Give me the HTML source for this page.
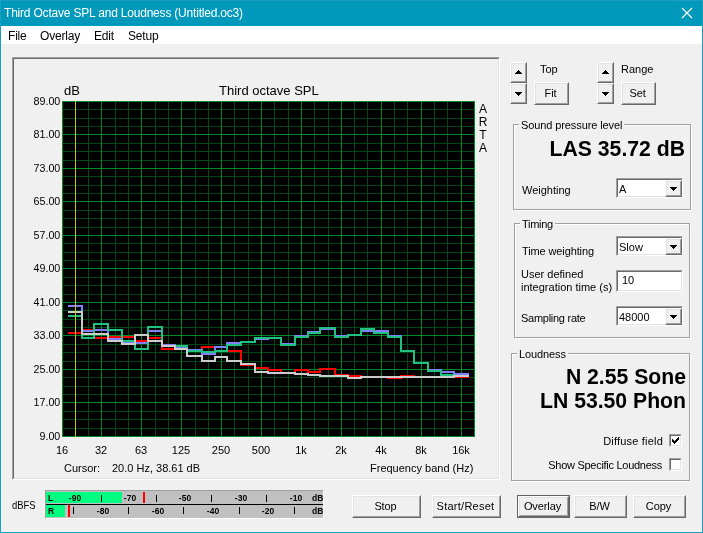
<!DOCTYPE html>
<html><head><meta charset="utf-8"><title>Third Octave SPL and Loudness</title>
<style>
*{box-sizing:border-box;margin:0;padding:0}
html,body{width:703px;height:533px;overflow:hidden;background:#f0f0f0}
body{position:relative;font-family:"Liberation Sans",sans-serif;font-size:11px;color:#000}
.abs,.win *{position:absolute}
.win{position:absolute;left:0;top:0;width:703px;height:533px;will-change:transform;box-shadow:inset 1px 0 #1a9fc0,inset -1px 0 #1a9fc0,inset 0 -1px #1a9fc0}
.title{left:0;top:0;width:703px;height:26px;background:#0099bc;box-shadow:inset 1px 0 #1a9fc0,inset -1px 0 #1a9fc0,inset 0 1px #1a9fc0}
.title span{left:4px;top:6px;font-size:12px;color:#fff;white-space:nowrap;letter-spacing:-.2px}
.menu{left:1px;top:26px;width:701px;height:18px;background:#fff}
.menu span{top:3px;font-size:12px;white-space:nowrap;letter-spacing:-.2px}
.t{white-space:nowrap;font-size:11px;line-height:13px}
.ar{font-family:"Liberation Sans",sans-serif;font-size:12px;line-height:14px;white-space:nowrap}
.yl{left:12px;width:48.3px;text-align:right;font-size:10.7px;line-height:14px}
.xl{width:40px;text-align:center;top:443px;font-size:11px;line-height:14px}
.frame{left:12px;top:57px;width:488px;height:423px;border:1px solid;border-color:#a0a0a0 #fff #fff #a0a0a0}
.frame i{left:0;top:0;right:0;bottom:0;border:1px solid;border-color:#696969 #e3e3e3 #e3e3e3 #696969}
.plot{left:62px;top:101px}
.btn{background:#f0f0f0;border:1px solid;border-color:#fff #696969 #696969 #fff;text-align:center;font-size:11px}
.btn:before{content:"";position:absolute;left:0;top:0;right:0;bottom:0;border:1px solid;border-color:#e3e3e3 #a0a0a0 #a0a0a0 #e3e3e3}
.btn span{left:-2px;right:0;text-align:center;top:4px;line-height:13px;letter-spacing:-.1px}
.grp{border:1px solid #fff;}
.grp:before{content:"";position:absolute;left:-2px;top:-2px;right:0;bottom:0;border:1px solid #a0a0a0}
.grp .lbl{top:-7px;left:4px;letter-spacing:-.1px;background:#f0f0f0;padding:0 2px;line-height:13px;white-space:nowrap}
.sunk{background:#fff;border:1px solid;border-color:#a0a0a0 #fff #fff #a0a0a0}
.sunk:before{content:"";position:absolute;left:0;top:0;right:0;bottom:0;border:1px solid;border-color:#696969 #e3e3e3 #e3e3e3 #696969}
.big{font-weight:bold;font-size:21.33px;line-height:24px;white-space:nowrap;text-align:right;right:18px}
.meter{background:#c0c0c0;border:1px solid;border-color:#a0a0a0 #fff #fff #a0a0a0;overflow:hidden}
.mt{font-size:8.5px;line-height:8px;font-weight:bold;white-space:nowrap}
.mt.c{width:20px;text-align:center}
.tk{width:1px;height:7px;background:#000}
.tri-u,.tri-d{width:7px;height:4px;background:linear-gradient(#000,#000) 3px 0/1px 1px no-repeat,linear-gradient(#000,#000) 2px 1px/3px 1px no-repeat,linear-gradient(#000,#000) 1px 2px/5px 1px no-repeat,linear-gradient(#000,#000) 0 3px/7px 1px no-repeat}
.tri-d{transform:scaleY(-1)}
</style></head><body>
<div class="win">
 <div class="title"><span>Third Octave SPL and Loudness (Untitled.oc3)</span>
  <svg style="left:681px;top:7px" width="12" height="12" viewBox="0 0 12 12"><path d="M1 1 L11 11 M11 1 L1 11" stroke="#fff" stroke-width="1.2" fill="none"/></svg>
 </div>
 <div class="menu"><span style="left:7px">File</span><span style="left:39px">Overlay</span><span style="left:93px">Edit</span><span style="left:127px">Setup</span></div>

 <div class="frame"><i></i></div>
 <div class="ar" style="left:64px;top:84px;font-size:13px">dB</div>
 <div class="ar" style="left:219px;top:84px;font-size:13px">Third octave SPL</div>
 <div class="ar" style="left:478px;top:103px;line-height:13px;width:10px;text-align:center">A<br>R<br>T<br>A</div>
 <div class="yl" style="top:94px">89.00</div>
<div class="yl" style="top:127px">81.00</div>
<div class="yl" style="top:161px">73.00</div>
<div class="yl" style="top:194px">65.00</div>
<div class="yl" style="top:228px">57.00</div>
<div class="yl" style="top:261px">49.00</div>
<div class="yl" style="top:295px">41.00</div>
<div class="yl" style="top:328px">33.00</div>
<div class="yl" style="top:362px">25.00</div>
<div class="yl" style="top:395px">17.00</div>
<div class="yl" style="top:429px">9.00</div>

 <div class="xl" style="left:42px">16</div>
<div class="xl" style="left:81px">32</div>
<div class="xl" style="left:121px">63</div>
<div class="xl" style="left:161px">125</div>
<div class="xl" style="left:201px">250</div>
<div class="xl" style="left:241px">500</div>
<div class="xl" style="left:281px">1k</div>
<div class="xl" style="left:321px">2k</div>
<div class="xl" style="left:361px">4k</div>
<div class="xl" style="left:401px">8k</div>
<div class="xl" style="left:441px">16k</div>

 <div class="ar" style="left:64px;top:461px;font-size:11px">Cursor:</div>
 <div class="ar" style="left:112px;top:461px;font-size:11px">20.0 Hz, 38.61 dB</div>
 <div class="ar" style="left:370px;top:461px;font-size:11px">Frequency band (Hz)</div>
 <svg class="plot" width="413" height="336" viewBox="62 101 413 336" shape-rendering="crispEdges">
<rect x="62" y="101" width="413" height="336" fill="#000"/>
<rect x="62" y="101" width="413" height="1" fill="#008828"/>
<rect x="62" y="109" width="413" height="1" fill="#004618"/>
<rect x="62" y="118" width="413" height="1" fill="#004618"/>
<rect x="62" y="126" width="413" height="1" fill="#004618"/>
<rect x="62" y="134" width="413" height="1" fill="#008828"/>
<rect x="62" y="143" width="413" height="1" fill="#004618"/>
<rect x="62" y="151" width="413" height="1" fill="#004618"/>
<rect x="62" y="160" width="413" height="1" fill="#004618"/>
<rect x="62" y="168" width="413" height="1" fill="#008828"/>
<rect x="62" y="176" width="413" height="1" fill="#004618"/>
<rect x="62" y="185" width="413" height="1" fill="#004618"/>
<rect x="62" y="193" width="413" height="1" fill="#004618"/>
<rect x="62" y="201" width="413" height="1" fill="#008828"/>
<rect x="62" y="210" width="413" height="1" fill="#004618"/>
<rect x="62" y="218" width="413" height="1" fill="#004618"/>
<rect x="62" y="227" width="413" height="1" fill="#004618"/>
<rect x="62" y="235" width="413" height="1" fill="#008828"/>
<rect x="62" y="243" width="413" height="1" fill="#004618"/>
<rect x="62" y="252" width="413" height="1" fill="#004618"/>
<rect x="62" y="260" width="413" height="1" fill="#004618"/>
<rect x="62" y="268" width="413" height="1" fill="#008828"/>
<rect x="62" y="277" width="413" height="1" fill="#004618"/>
<rect x="62" y="285" width="413" height="1" fill="#004618"/>
<rect x="62" y="294" width="413" height="1" fill="#004618"/>
<rect x="62" y="302" width="413" height="1" fill="#008828"/>
<rect x="62" y="310" width="413" height="1" fill="#004618"/>
<rect x="62" y="319" width="413" height="1" fill="#004618"/>
<rect x="62" y="327" width="413" height="1" fill="#004618"/>
<rect x="62" y="335" width="413" height="1" fill="#008828"/>
<rect x="62" y="344" width="413" height="1" fill="#004618"/>
<rect x="62" y="352" width="413" height="1" fill="#004618"/>
<rect x="62" y="361" width="413" height="1" fill="#004618"/>
<rect x="62" y="369" width="413" height="1" fill="#008828"/>
<rect x="62" y="377" width="413" height="1" fill="#004618"/>
<rect x="62" y="386" width="413" height="1" fill="#004618"/>
<rect x="62" y="394" width="413" height="1" fill="#004618"/>
<rect x="62" y="402" width="413" height="1" fill="#008828"/>
<rect x="62" y="411" width="413" height="1" fill="#004618"/>
<rect x="62" y="419" width="413" height="1" fill="#004618"/>
<rect x="62" y="428" width="413" height="1" fill="#004618"/>
<rect x="62" y="436" width="413" height="1" fill="#008828"/>
<rect x="62" y="101" width="1" height="336" fill="#008828"/>
<rect x="75" y="101" width="1" height="336" fill="#004618"/>
<rect x="88" y="101" width="1" height="336" fill="#004618"/>
<rect x="101" y="101" width="1" height="336" fill="#008828"/>
<rect x="115" y="101" width="1" height="336" fill="#004618"/>
<rect x="128" y="101" width="1" height="336" fill="#004618"/>
<rect x="141" y="101" width="1" height="336" fill="#008828"/>
<rect x="155" y="101" width="1" height="336" fill="#004618"/>
<rect x="168" y="101" width="1" height="336" fill="#004618"/>
<rect x="181" y="101" width="1" height="336" fill="#008828"/>
<rect x="195" y="101" width="1" height="336" fill="#004618"/>
<rect x="208" y="101" width="1" height="336" fill="#004618"/>
<rect x="221" y="101" width="1" height="336" fill="#008828"/>
<rect x="234" y="101" width="1" height="336" fill="#004618"/>
<rect x="248" y="101" width="1" height="336" fill="#004618"/>
<rect x="261" y="101" width="1" height="336" fill="#008828"/>
<rect x="274" y="101" width="1" height="336" fill="#004618"/>
<rect x="288" y="101" width="1" height="336" fill="#004618"/>
<rect x="301" y="101" width="1" height="336" fill="#008828"/>
<rect x="314" y="101" width="1" height="336" fill="#004618"/>
<rect x="328" y="101" width="1" height="336" fill="#004618"/>
<rect x="341" y="101" width="1" height="336" fill="#008828"/>
<rect x="354" y="101" width="1" height="336" fill="#004618"/>
<rect x="367" y="101" width="1" height="336" fill="#004618"/>
<rect x="381" y="101" width="1" height="336" fill="#008828"/>
<rect x="394" y="101" width="1" height="336" fill="#004618"/>
<rect x="407" y="101" width="1" height="336" fill="#004618"/>
<rect x="421" y="101" width="1" height="336" fill="#008828"/>
<rect x="434" y="101" width="1" height="336" fill="#004618"/>
<rect x="447" y="101" width="1" height="336" fill="#004618"/>
<rect x="461" y="101" width="1" height="336" fill="#008828"/>
<rect x="474" y="101" width="1" height="336" fill="#008828"/>
<rect x="62" y="101" width="413" height="1" fill="#008828"/>
<rect x="62" y="134" width="413" height="1" fill="#008828"/>
<rect x="62" y="168" width="413" height="1" fill="#008828"/>
<rect x="62" y="201" width="413" height="1" fill="#008828"/>
<rect x="62" y="235" width="413" height="1" fill="#008828"/>
<rect x="62" y="268" width="413" height="1" fill="#008828"/>
<rect x="62" y="302" width="413" height="1" fill="#008828"/>
<rect x="62" y="335" width="413" height="1" fill="#008828"/>
<rect x="62" y="369" width="413" height="1" fill="#008828"/>
<rect x="62" y="402" width="413" height="1" fill="#008828"/>
<rect x="62" y="436" width="413" height="1" fill="#008828"/>
<path d="M69 333 L82 333 L82 330 L94 330 L94 338 L108 338 L108 337 L122 337 L122 337 L135 337 L135 341 L148 341 L148 338 L162 338 L162 349 L175 349 L175 348 L187 348 L187 351 L202 351 L202 347 L215 347 L215 347 L227 347 L227 351 L241 351 L241 365 L255 365 L255 368 L268 368 L268 370 L281 370 L281 373 L295 373 L295 370 L308 370 L308 372 L320 372 L320 369 L335 369 L335 375 L348 375 L348 376 L361 376 L361 377 L374 377 L374 377 L388 377 L388 378 L401 378 L401 376 L414 376 L414 377 L428 377 L428 377 L441 377 L441 377 L454 377 L454 377 L468 377" fill="none" stroke="#ff0000" stroke-width="2" stroke-linejoin="miter" stroke-linecap="square"/>
<path d="M69 306 L82 306 L82 331 L94 331 L94 330 L108 330 L108 339 L122 339 L122 343 L135 343 L135 343 L148 343 L148 331 L162 331 L162 345 L175 345 L175 348 L187 348 L187 350 L202 350 L202 354 L215 354 L215 347 L227 347 L227 343 L241 343 L241 342 L255 342 L255 339 L268 339 L268 338 L281 338 L281 344 L295 344 L295 336 L308 336 L308 332 L320 332 L320 329 L335 329 L335 336 L348 336 L348 335 L361 335 L361 331 L374 331 L374 331 L388 331 L388 336 L401 336 L401 351 L414 351 L414 363 L428 363 L428 370 L441 370 L441 372 L454 372 L454 374 L468 374" fill="none" stroke="#8080ff" stroke-width="2" stroke-linejoin="miter" stroke-linecap="square"/>
<path d="M69 316 L82 316 L82 338 L94 338 L94 324 L108 324 L108 330 L122 330 L122 341 L135 341 L135 349 L148 349 L148 327 L162 327 L162 346 L175 346 L175 346 L187 346 L187 351 L202 351 L202 352 L215 352 L215 351 L227 351 L227 345 L241 345 L241 342 L255 342 L255 338 L268 338 L268 338 L281 338 L281 345 L295 345 L295 337 L308 337 L308 333 L320 333 L320 328 L335 328 L335 337 L348 337 L348 335 L361 335 L361 329 L374 329 L374 333 L388 333 L388 337 L401 337 L401 351 L414 351 L414 363 L428 363 L428 371 L441 371 L441 375 L454 375 L454 376 L468 376" fill="none" stroke="#20c080" stroke-width="2" stroke-linejoin="miter" stroke-linecap="square"/>
<path d="M69 312 L82 312 L82 334 L94 334 L94 334 L108 334 L108 341 L122 341 L122 344 L135 344 L135 335 L148 335 L148 341 L162 341 L162 346 L175 346 L175 349 L187 349 L187 356 L202 356 L202 361 L215 361 L215 357 L227 357 L227 361 L241 361 L241 364 L255 364 L255 372 L268 372 L268 373 L281 373 L281 373 L295 373 L295 374 L308 374 L308 375 L320 375 L320 376 L335 376 L335 376 L348 376 L348 378 L361 378 L361 377 L374 377 L374 377 L388 377 L388 377 L401 377 L401 377 L414 377 L414 377 L428 377 L428 377 L441 377 L441 377 L454 377 L454 376 L468 376" fill="none" stroke="#cccccc" stroke-width="2" stroke-linejoin="miter" stroke-linecap="square"/>
<rect x="75" y="101" width="1" height="336" fill="#cfc200"/>
</svg>

 <!-- meter -->
 <div class="t" style="left:12px;top:499px;transform:scaleX(.86);transform-origin:0 0">dBFS</div>
 <div class="meter" style="left:45px;top:490px;width:279px;height:29px"><div style="left:0;top:1px;width:76px;height:11px;background:#00ff80"></div><div style="left:0;top:14px;width:19px;height:12px;background:#00ff80"></div><div style="left:0;top:13px;width:277px;height:1px;background:#000"></div><div style="left:97px;top:1px;width:2px;height:11px;background:#f00"></div><div style="left:22px;top:14px;width:2px;height:12px;background:#f00"></div><span class="mt" style="left:2px;top:3px">L</span><span class="mt" style="left:2px;top:16px">R</span><span class="mt c" style="left:19px;top:3px">-90</span><div class="tk" style="left:27px;top:16px"></div><span class="mt c" style="left:47px;top:16px">-80</span><div class="tk" style="left:55px;top:4px"></div><span class="mt c" style="left:74px;top:3px">-70</span><div class="tk" style="left:82px;top:16px"></div><span class="mt c" style="left:102px;top:16px">-60</span><div class="tk" style="left:110px;top:4px"></div><span class="mt c" style="left:129px;top:3px">-50</span><div class="tk" style="left:137px;top:16px"></div><span class="mt c" style="left:157px;top:16px">-40</span><div class="tk" style="left:165px;top:4px"></div><span class="mt c" style="left:185px;top:3px">-30</span><div class="tk" style="left:193px;top:16px"></div><span class="mt c" style="left:212px;top:16px">-20</span><div class="tk" style="left:220px;top:4px"></div><span class="mt c" style="left:240px;top:3px">-10</span><div class="tk" style="left:248px;top:16px"></div><span class="mt" style="left:266px;top:3px">dB</span><span class="mt" style="left:266px;top:16px">dB</span></div>

 <!-- bottom buttons -->
 <div class="btn" style="left:352px;top:495px;width:69px;height:23px"><span>Stop</span></div>
 <div class="btn" style="left:432px;top:495px;width:69px;height:23px"><span style="letter-spacing:.25px">Start/Reset</span></div>
 <div class="abs" style="left:517px;top:495px;width:53px;height:23px;background:#646464"></div><div class="btn def" style="left:518px;top:496px;width:51px;height:21px"><span style="top:3px">Overlay</span></div>
 <div class="btn" style="left:574px;top:495px;width:53px;height:23px"><span>B/W</span></div>
 <div class="btn" style="left:633px;top:495px;width:53px;height:23px"><span>Copy</span></div>

 <!-- top right -->
 <div class="btn" style="left:510px;top:62px;width:17px;height:21px"><b class="tri-u" style="left:4px;top:7px"></b></div>
 <div class="btn" style="left:510px;top:83px;width:17px;height:21px"><b class="tri-d" style="left:4px;top:8px"></b></div>
 <div class="t" style="left:540px;top:63px">Top</div>
 <div class="btn" style="left:534px;top:82px;width:35px;height:23px"><span>Fit</span></div>
 <div class="btn" style="left:597px;top:62px;width:17px;height:21px"><b class="tri-u" style="left:4px;top:7px"></b></div>
 <div class="btn" style="left:597px;top:83px;width:17px;height:21px"><b class="tri-d" style="left:4px;top:8px"></b></div>
 <div class="t" style="left:621px;top:63px">Range</div>
 <div class="btn" style="left:621px;top:82px;width:35px;height:23px"><span>Set</span></div>

 <!-- SPL group -->
 <div class="grp" style="left:514px;top:125px;width:178px;height:86px"><span class="lbl">Sound pressure level</span></div>
 <div class="big" style="top:137px;font-size:21.2px">LAS 35.72 dB</div>
 <div class="t" style="left:522px;top:184px">Weighting</div>
 <div class="sunk" style="left:616px;top:178px;width:67px;height:20px"><span class="t" style="left:2px;top:4px">A</span><div class="btn" style="right:0;top:1px;width:17px;height:17px"><b class="tri-d" style="left:4px;top:6px"></b></div></div>

 <!-- Timing group -->
 <div class="grp" style="left:515px;top:224px;width:176px;height:115px"><span class="lbl" style="letter-spacing:-.3px">Timing</span></div>
 <div class="t" style="left:522px;top:245px;letter-spacing:-.12px">Time weighting</div>
 <div class="sunk" style="left:616px;top:236px;width:67px;height:20px"><span class="t" style="left:2px;top:4px">Slow</span><div class="btn" style="right:0;top:1px;width:17px;height:17px"><b class="tri-d" style="left:4px;top:6px"></b></div></div>
 <div class="t" style="left:521px;top:268px">User defined</div>
 <div class="t" style="left:521px;top:281px">integration time (s)</div>
 <div class="sunk" style="left:616px;top:270px;width:67px;height:22px"><span class="t" style="left:5px;top:3px">10</span></div>
 <div class="t" style="left:521px;top:312px;letter-spacing:-.27px">Sampling rate</div>
 <div class="sunk" style="left:616px;top:306px;width:67px;height:20px"><span class="t" style="left:2px;top:4px">48000</span><div class="btn" style="right:0;top:1px;width:17px;height:17px"><b class="tri-d" style="left:4px;top:6px"></b></div></div>

 <!-- Loudness group -->
 <div class="grp" style="left:512px;top:354px;width:179px;height:128px"><span class="lbl">Loudness</span></div>
 <div class="big" style="top:365px;font-size:21.2px;right:17px">N 2.55 Sone</div>
 <div class="big" style="top:389px;font-size:21.2px;right:17px">LN 53.50 Phon</div>
 <div class="t" style="right:40px;top:435px;letter-spacing:.2px">Diffuse field</div>
 <div class="sunk" style="left:669px;top:434px;width:13px;height:13px"><svg style="left:2px;top:2px" width="7" height="7" viewBox="0 0 7 7" shape-rendering="crispEdges" fill="#000"><rect x="6" y="0" width="1" height="1"/><rect x="5" y="1" width="2" height="1"/><rect x="0" y="2" width="1" height="1"/><rect x="4" y="2" width="3" height="1"/><rect x="0" y="3" width="2" height="1"/><rect x="3" y="3" width="3" height="1"/><rect x="0" y="4" width="5" height="1"/><rect x="1" y="5" width="3" height="1"/><rect x="2" y="6" width="1" height="1"/></svg></div>
 <div class="t" style="right:41px;top:459px;letter-spacing:-.28px">Show Specific Loudness</div>
 <div class="sunk" style="left:669px;top:458px;width:13px;height:13px"></div>
</div>
</body></html>
